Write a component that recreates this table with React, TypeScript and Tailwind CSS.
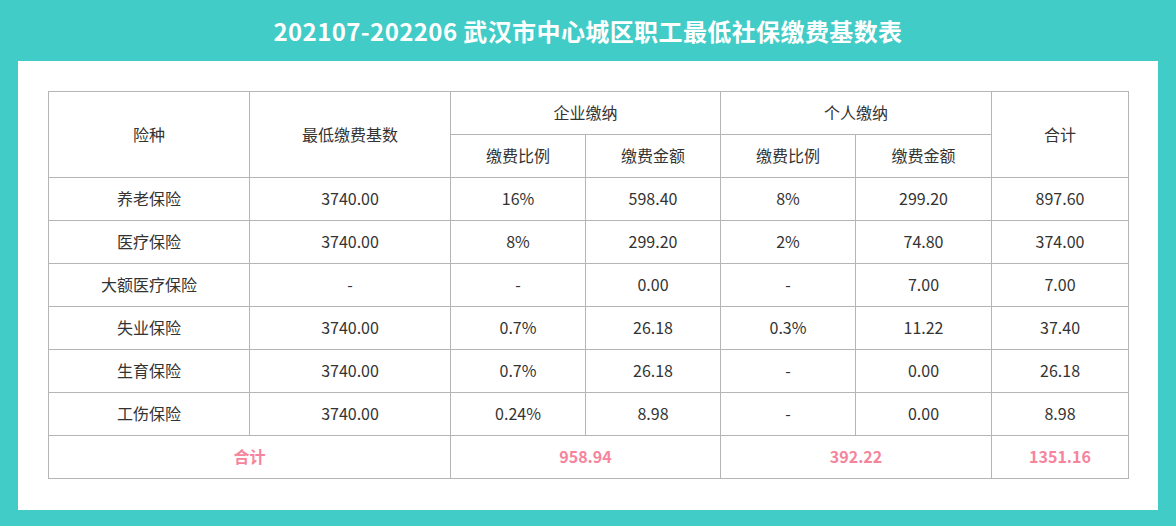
import React from "react"

const rows = [
  ["养老保险", "3740.00", "16%", "598.40", "8%", "299.20", "897.60"],
  ["医疗保险", "3740.00", "8%", "299.20", "2%", "74.80", "374.00"],
  ["大额医疗保险", "-", "-", "0.00", "-", "7.00", "7.00"],
  ["失业保险", "3740.00", "0.7%", "26.18", "0.3%", "11.22", "37.40"],
  ["生育保险", "3740.00", "0.7%", "26.18", "-", "0.00", "26.18"],
  ["工伤保险", "3740.00", "0.24%", "8.98", "-", "0.00", "8.98"],
]

const cell = "border border-[#b5b5b5] h-[43px] p-0 pb-[2px] text-center align-middle font-normal"

export default function App() {
  return (
    <div
      className="w-[1176px] h-[526px] bg-[#42ccc7] flex flex-col"
      style={{ fontFamily: '"Noto Sans CJK SC", "Noto Sans", sans-serif' }}
    >
      {/* Title bar */}
      <div className="h-[61px] flex items-center justify-center">
        <h1 className="text-white text-[24px] font-bold leading-none tracking-[0.4px]">
          202107-202206 武汉市中心城区职工最低社保缴费基数表
        </h1>
      </div>

      {/* White panel */}
      <div className="mx-[18px] bg-white pt-[30px] pb-[31px] px-[30px]">
        <table className="w-[1080px] border-collapse table-fixed text-[16px] text-[#333]">
          <colgroup>
            <col className="w-[201px]" />
            <col className="w-[201px]" />
            <col className="w-[135px]" />
            <col className="w-[135px]" />
            <col className="w-[135px]" />
            <col className="w-[136px]" />
            <col className="w-[137px]" />
          </colgroup>
          <thead>
            <tr>
              <th rowSpan={2} className={cell}>险种</th>
              <th rowSpan={2} className={cell}>最低缴费基数</th>
              <th colSpan={2} className={cell}>企业缴纳</th>
              <th colSpan={2} className={cell}>个人缴纳</th>
              <th rowSpan={2} className={cell}>合计</th>
            </tr>
            <tr>
              <th className={cell}>缴费比例</th>
              <th className={cell}>缴费金额</th>
              <th className={cell}>缴费比例</th>
              <th className={cell}>缴费金额</th>
            </tr>
          </thead>
          <tbody>
            {rows.map((r) => (
              <tr key={r[0]}>
                {r.map((v, i) => (
                  <td key={i} className={cell}>{v}</td>
                ))}
              </tr>
            ))}
            <tr className="text-[#f7849d]">
              <td colSpan={2} className={cell + " !font-bold"}>合计</td>
              <td colSpan={2} className={cell + " !font-bold"}>958.94</td>
              <td colSpan={2} className={cell + " !font-bold"}>392.22</td>
              <td className={cell + " !font-bold"}>1351.16</td>
            </tr>
          </tbody>
        </table>
      </div>
    </div>
  )
}
